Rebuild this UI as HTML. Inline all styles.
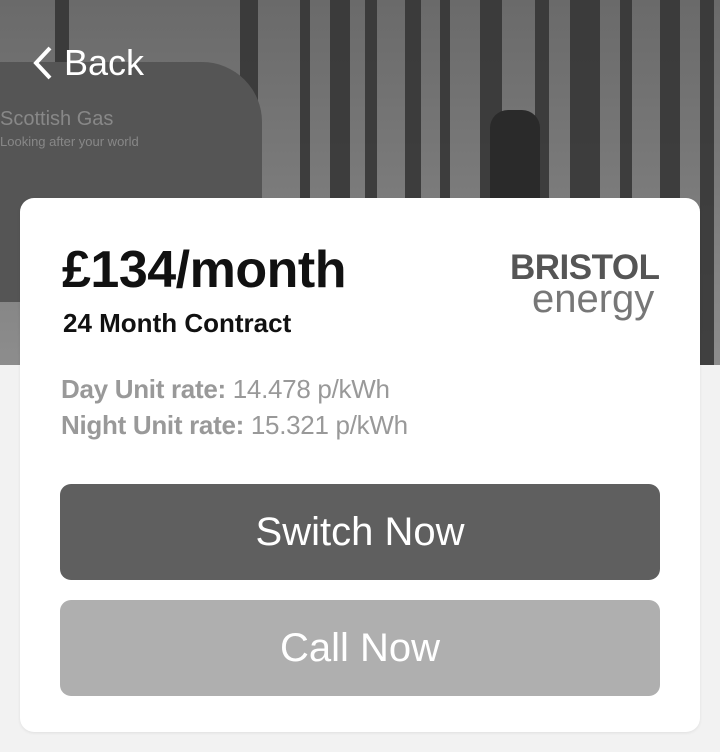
<!DOCTYPE html>
<html><head><style>
*{margin:0;padding:0;box-sizing:border-box}
body{width:720px;height:752px;background:#f2f2f2;font-family:"Liberation Sans",sans-serif;position:relative;overflow:hidden}
.hero{position:absolute;left:0;top:0;width:720px;height:365px;background:linear-gradient(#6a6a6a,#7a7a7a 50%,#8d8d8d);overflow:hidden}
.t{position:absolute;top:0;background:#333;height:365px;opacity:.85}
.van{position:absolute;left:-10px;top:62px;width:272px;height:240px;background:#555;border-radius:0 60px 10px 0}
.back{position:absolute;left:32px;top:42px;color:#fff;font-size:36px;display:flex;align-items:center;gap:10px}
.card{position:absolute;left:20px;top:198px;width:680px;height:534px;background:#fff;border-radius:14px;box-shadow:0 1px 3px rgba(0,0,0,.08)}
.price{position:absolute;left:42px;top:42px;font-size:52px;font-weight:bold;color:#111;letter-spacing:-0.5px}
.term{position:absolute;left:43px;top:110px;font-size:26px;font-weight:bold;color:#111}
.logo{position:absolute;left:490px;top:52px;line-height:1}
.logo .b{font-size:35px;font-weight:bold;color:#555;letter-spacing:-0.5px}
.logo .e{font-size:40px;color:#777;margin-left:22px;margin-top:-6px}
.rate{position:absolute;left:41px;font-size:26px;color:#999;letter-spacing:-0.3px}
.rate b{color:#999}
.btn{position:absolute;left:40px;width:600px;height:96px;border-radius:11px;color:#fff;font-size:40px;display:flex;align-items:center;justify-content:center}
</style></head><body>
<div class="hero">
<div class="t" style="left:55px;width:14px"></div>
<div class="t" style="left:240px;width:18px"></div>
<div class="t" style="left:300px;width:10px"></div>
<div class="t" style="left:330px;width:20px"></div>
<div class="t" style="left:365px;width:12px"></div>
<div class="t" style="left:405px;width:16px"></div>
<div class="t" style="left:440px;width:10px"></div>
<div class="t" style="left:480px;width:22px"></div>
<div class="t" style="left:535px;width:14px"></div>
<div class="t" style="left:570px;width:30px"></div>
<div class="t" style="left:620px;width:12px"></div>
<div class="t" style="left:660px;width:20px"></div>
<div class="t" style="left:700px;width:14px"></div>
<div class="van"></div>
<div style="position:absolute;left:0;top:108px;color:#888;font-size:20px">Scottish Gas</div>
<div style="position:absolute;left:0;top:134px;color:#888;font-size:13px">Looking after your world</div>
<div style="position:absolute;left:490px;top:110px;width:50px;height:100px;background:#2a2a2a;border-radius:18px 18px 0 0"></div>
<div class="back"><svg width="22" height="36" viewBox="0 0 22 36"><path d="M18 3 L4 18 L18 33" stroke="#fff" stroke-width="4" fill="none"/></svg>Back</div>
</div>
<div class="card">
<div class="price">£134/month</div>
<div class="term">24 Month Contract</div>
<div class="logo"><div class="b">BRISTOL</div><div class="e">energy</div></div>
<div class="rate" style="top:176px"><b>Day Unit rate:</b> 14.478 p/kWh</div>
<div class="rate" style="top:212px"><b>Night Unit rate:</b> 15.321 p/kWh</div>
<div class="btn" style="top:286px;background:#5f5f5f">Switch Now</div>
<div class="btn" style="top:402px;background:#afafaf">Call Now</div>
</div>
</body></html>
